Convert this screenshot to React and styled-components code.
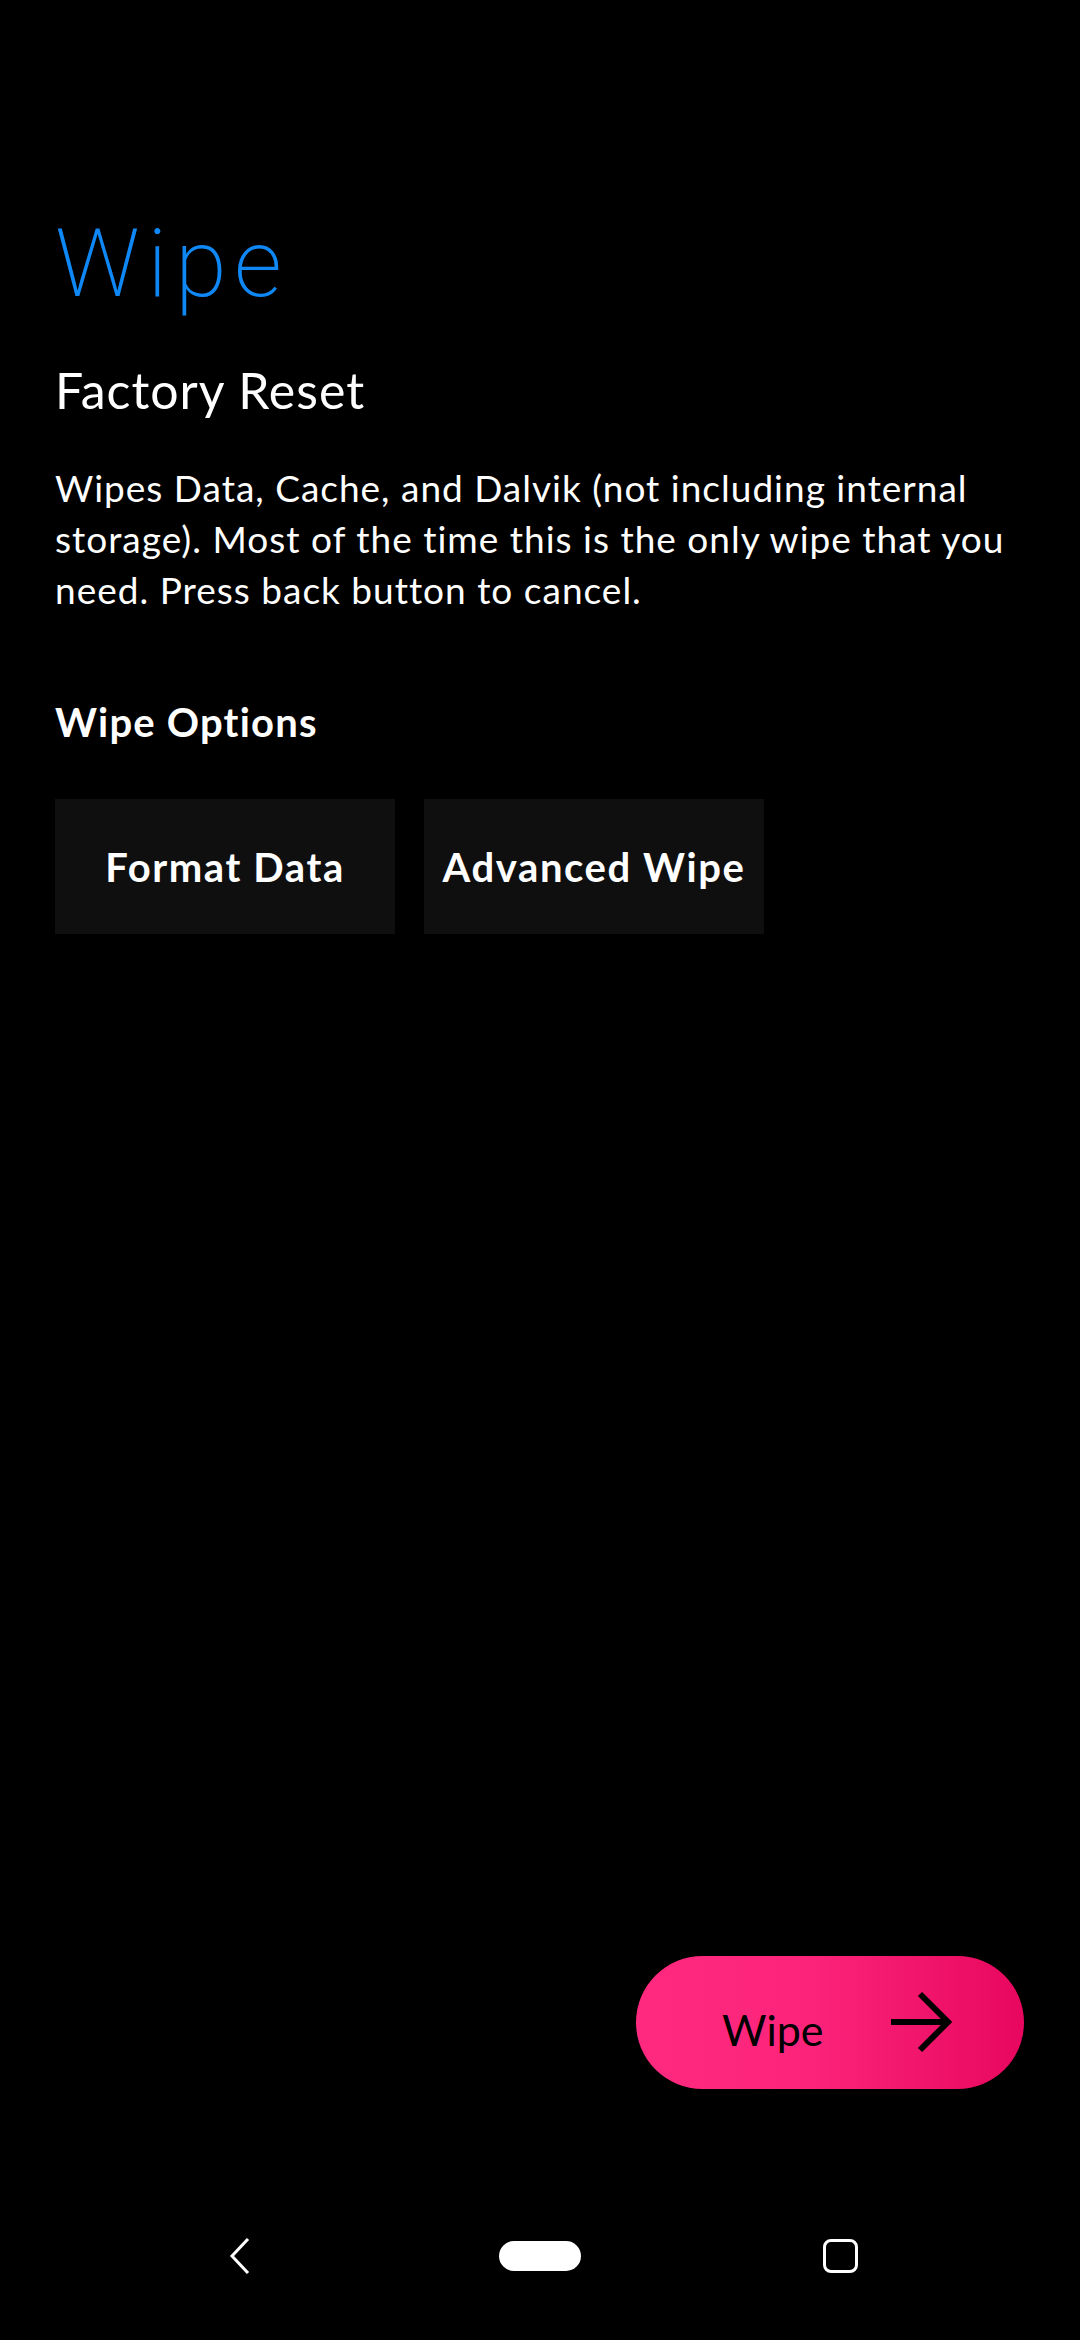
import React from "react";
import styled, { createGlobalStyle } from "styled-components";

const Global = createGlobalStyle`
  html, body { margin: 0; padding: 0; background: #000; }
  body { font-family: "Lato", "Noto Sans", sans-serif; color: #fff; }
  * { box-sizing: border-box; }
`;

const Screen = styled.div`
  width: 1080px;
  height: 2340px;
  background: #000;
  display: flex;
  flex-direction: column;
`;

const Content = styled.main`
  padding: 209px 40px 0 55px;
  display: flex;
  flex-direction: column;
  flex: 1;
`;

const Title = styled.h1`
  margin: 0;
  font-family: "Roboto", sans-serif;
  font-weight: 200;
  font-size: 94px;
  line-height: 110px;
  color: #0f88f5;
  letter-spacing: 7.5px;
`;

const Subtitle = styled.h2`
  margin: 41px 0 0;
  font-family: "Lato", sans-serif;
  font-weight: 400;
  font-size: 50px;
  line-height: 60px;
  letter-spacing: 1px;
  color: #fff;
`;

const Paragraph = styled.p`
  margin: 42px 0 0;
  font-family: "Lato", sans-serif;
  font-size: 37px;
  line-height: 51px;
  letter-spacing: 1px;
  color: #fff;
  max-width: 975px;
`;

const SectionLabel = styled.h3`
  margin: 82px 0 0;
  font-family: "Lato", sans-serif;
  font-weight: 700;
  font-size: 40px;
  line-height: 50px;
  letter-spacing: 1.2px;
  color: #fff;
`;

const OptionRow = styled.div`
  display: flex;
  gap: 29px;
  margin-top: 52px;
`;

const OptionButton = styled.button`
  width: 340px;
  height: 135px;
  background: #0f0f0f;
  border: none;
  color: #fff;
  font-family: "Lato", sans-serif;
  font-weight: 700;
  font-size: 40px;
  letter-spacing: 1.6px;
  padding: 0;
  display: flex;
  align-items: center;
  justify-content: center;
`;

const ActionRow = styled.div`
  display: flex;
  justify-content: flex-end;
  padding: 0 56px 83px 0;
`;

const WipeButton = styled.button`
  width: 388px;
  height: 133px;
  border: none;
  border-radius: 67px;
  background: linear-gradient(90deg, #ff2a80 0%, #fb247a 45%, #e8075e 100%);
  display: flex;
  align-items: center;
  padding: 0 70px 0 86px;
  justify-content: space-between;
  color: #000;
  font-family: "Lato", sans-serif;
  font-size: 43px;
`;

const ButtonLabel = styled.span`
  padding-top: 14px;
`;

const NavBar = styled.nav`
  height: 168px;
  display: grid;
  grid-template-columns: repeat(3, 1fr);
  padding: 0 90px;
  align-items: center;
  justify-items: center;
`;

const HomePill = styled.div`
  width: 82px;
  height: 30px;
  border-radius: 15px;
  background: #fff;
`;

const RecentsSquare = styled.div`
  width: 35px;
  height: 34px;
  border: 3.5px solid #fff;
  border-radius: 8px;
`;

const Arrow = () => (
  <svg width="64" height="64" viewBox="0 0 64 64" fill="none">
    <path d="M1 31 H58" stroke="#000" strokeWidth="6" />
    <path d="M30 3 L58 31 L30 59" stroke="#000" strokeWidth="6" fill="none" />
  </svg>
);

const Back = () => (
  <svg width="24" height="36" viewBox="0 0 24 36" fill="none">
    <path d="M20 1 L4 18 L20 35" stroke="#fff" strokeWidth="3" fill="none" />
  </svg>
);

export default function App() {
  return (
    <>
      <Global />
      <Screen>
        <Content>
          <Title>Wipe</Title>
          <Subtitle>Factory Reset</Subtitle>
          <Paragraph>
            Wipes Data, Cache, and Dalvik (not including internal storage). Most of the time this is the only wipe that you need. Press back button to cancel.
          </Paragraph>
          <SectionLabel>Wipe Options</SectionLabel>
          <OptionRow>
            <OptionButton>Format Data</OptionButton>
            <OptionButton>Advanced Wipe</OptionButton>
          </OptionRow>
        </Content>
        <ActionRow>
          <WipeButton>
            <ButtonLabel>Wipe</ButtonLabel>
            <Arrow />
          </WipeButton>
        </ActionRow>
        <NavBar>
          <Back />
          <HomePill />
          <RecentsSquare />
        </NavBar>
      </Screen>
    </>
  );
}
